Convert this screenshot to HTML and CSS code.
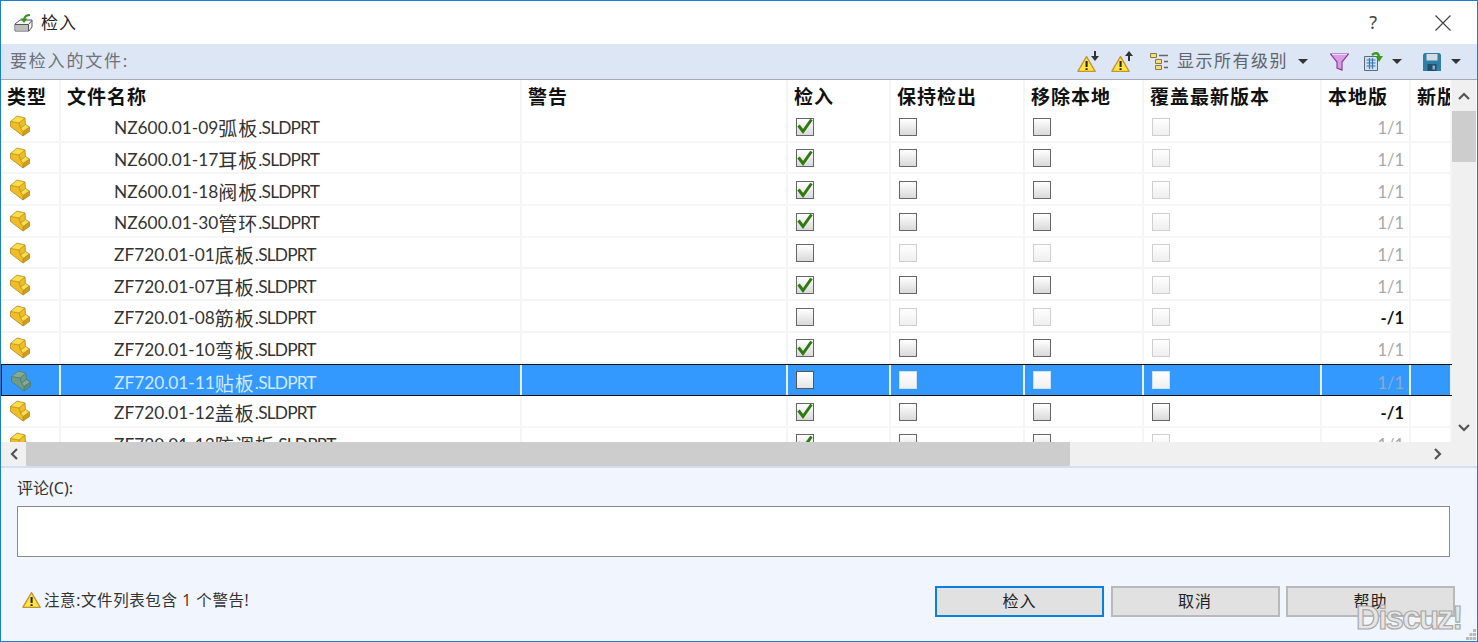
FILE: index.html
```html
<!DOCTYPE html>
<html lang="zh-CN">
<head>
<meta charset="utf-8">
<title>检入</title>
<link rel="stylesheet" href="styles.css">
</head>
<body>
<svg class="defs" width="0" height="0" aria-hidden="true">
  <symbol id="part" viewBox="0 0 20 22">
    <path class="p-side" d="M.5 6.500 9 8 10.500 13 13 16.500V21L.5 11.500Z"/>
    <path class="p-top" d="M.5 6.500 7 1 15 3 9 8Z"/>
    <path class="p-side" d="M9 8 15 3 15.500 9.500 10.500 13Z"/>
    <path class="p-top" d="M10.500 13 15.500 9.500 19.500 12 13 16.500Z"/>
    <path class="p-dark" d="M13 16.500 19.500 12V16.500L13 21Z"/>
    <path class="p-line" d="M.5 6.500 7 1 15 3 15.500 9.500 19.500 12V16.500L13 21 .5 11.500ZM.5 6.500 9 8 15 3M9 8 10.500 13 15.500 9.500M10.500 13 13 16.500 19.500 12M13 16.500V21"/>
  </symbol>
  <symbol id="tick" viewBox="0 0 18 18">
    <path d="M2.500 8.500 7 14.500 15.500 2.500" fill="none" stroke="#2e7a10" stroke-width="3"/>
  </symbol>
  <symbol id="warn" viewBox="0 0 22 20">
    <path d="M11 1.500 21 18.500H1Z" fill="#ffe83c" stroke="#c9913c" stroke-width="1.600" stroke-linejoin="round"/>
    <path d="M9.900 6.500h2.400v7H9.900ZM9.900 14.800h2.400v2.200H9.900Z" fill="#222"/>
  </symbol>
</svg>

<div class="window">
  <header class="titlebar">
    <svg class="title-icon" width="20" height="20" viewBox="0 0 20 20">
      <path d="M1 11 6 7H18V14L15 18H1Z" fill="#f4f4f4" stroke="#555"/>
      <path d="M1 11.500H14.500V18M14.500 11.500 18 7.500" fill="none" stroke="#555"/>
      <path d="M1.500 12H14V17.500H1.500Z" fill="#bdbdbd"/>
      <path d="M16 2C12 2 10.500 3.500 10 6.500" fill="none" stroke="#3d8f1e" stroke-width="2"/>
      <path d="M6.500 5.500H13.500L10 10Z" fill="#3d8f1e"/>
    </svg>
    <span class="title-text">检入</span>
    <span class="title-help">?</span>
    <svg class="title-close" width="16" height="16" viewBox="0 0 16 16">
      <path d="M.5.500 15.500 15.500M15.500.500 .5 15.500" stroke="#444" stroke-width="1.200"/>
    </svg>
  </header>

  <div class="toolbar">
    <span class="tb-label">要检入的文件:</span>
    <div class="tb-tools">
      <span class="tb-warn">
        <svg width="19" height="18" viewBox="0 0 22 20"><use href="#warn"/></svg>
        <svg class="tb-arrow" width="8" height="10" viewBox="0 0 8 10"><path d="M4 0V6" stroke="#333" stroke-width="2"/><path d="M0 5H8L4 10Z" fill="#333"/></svg>
      </span>
      <span class="tb-warn tb-warn2">
        <svg width="19" height="18" viewBox="0 0 22 20"><use href="#warn"/></svg>
        <svg class="tb-arrow" width="8" height="10" viewBox="0 0 8 10"><path d="M4 10V4" stroke="#333" stroke-width="2"/><path d="M0 5H8L4 0Z" fill="#333"/></svg>
      </span>
      <svg class="tb-levels" width="19" height="17" viewBox="0 0 19 17">
        <path d="M.5.500H6.500V4.500H.5ZM5.500 6.500H11.500V10.500H5.500ZM5.500 12.500H11.500V16.500H5.500Z" fill="#f8dc7c" stroke="#8a7a40"/>
        <path d="M9 2.500H18M14 8.500H18M14 14.500H18" stroke="#666" stroke-width="1.500"/>
      </svg>
      <span class="tb-levels-text">显示所有级别</span>
      <span class="caret caret-levels"></span>
      <svg class="tb-funnel" width="19" height="18" viewBox="0 0 19 18">
        <path d="M.5 1H18.500L12 9V17L7 15V9Z" fill="#d99ce6" stroke="#8a3fa0" stroke-width="1.200"/>
        <path d="M2 1.500H17" stroke="#f4dcf8" stroke-width="1"/>
      </svg>
      <svg class="tb-export" width="20" height="19" viewBox="0 0 20 19">
        <path d="M.5 4.500H13.500V18.500H.5Z" fill="#cfe0f0" stroke="#5a6a7a"/>
        <path d="M2.500 8H11.500M2.500 11H11.500M2.500 14H11.500M5.500 6V17M8.500 6V17" stroke="#3c78b8" stroke-width="1.200"/>
        <path d="M8 3C11 .5 14 .5 15 4" fill="none" stroke="#3d9a1e" stroke-width="2.400"/>
        <path d="M11.500 4H19L15 10Z" fill="#3d9a1e"/>
      </svg>
      <span class="caret caret-export"></span>
      <svg class="tb-save" width="18" height="18" viewBox="0 0 18 18">
        <path d="M0 1.500 1.500 0H16.500L18 1.500V18H0Z" fill="#2f7fa8"/>
        <path d="M3.500 1H14.500V7.500H3.500Z" fill="#d6dce2"/>
        <path d="M4.500 11H13.500V18H4.500Z" fill="#1f4f6a"/>
        <path d="M9.500 12.500H12V16.500H9.500Z" fill="#8fb0c4"/>
      </svg>
      <span class="caret caret-save"></span>
    </div>
  </div>

  <div class="listbox">
    <div class="table">
      <div class="row hdr">
        <div class="cell">类型</div><div class="cell">文件名称</div><div class="cell">警告</div><div class="cell">检入</div><div class="cell">保持检出</div><div class="cell">移除本地</div><div class="cell">覆盖最新版本</div><div class="cell">本地版</div><div class="cell">新版本</div>
      </div>

      <div class="row">
        <div class="cell"><svg class="part"><use href="#part"/></svg></div>
        <div class="cell name">NZ600.01-09<span class="cjk">弧板</span><span class="ext">.SLDPRT</span></div><div class="cell"></div>
        <div class="cell"><span class="cb on"><svg><use href="#tick"/></svg></span></div><div class="cell"><span class="cb"></span></div><div class="cell"><span class="cb"></span></div><div class="cell"><span class="cb off"></span></div>
        <div class="cell ver">1/1</div><div class="cell"></div>
      </div>
      <div class="row">
        <div class="cell"><svg class="part"><use href="#part"/></svg></div>
        <div class="cell name">NZ600.01-17<span class="cjk">耳板</span><span class="ext">.SLDPRT</span></div><div class="cell"></div>
        <div class="cell"><span class="cb on"><svg><use href="#tick"/></svg></span></div><div class="cell"><span class="cb"></span></div><div class="cell"><span class="cb"></span></div><div class="cell"><span class="cb off"></span></div>
        <div class="cell ver">1/1</div><div class="cell"></div>
      </div>
      <div class="row">
        <div class="cell"><svg class="part"><use href="#part"/></svg></div>
        <div class="cell name">NZ600.01-18<span class="cjk">阀板</span><span class="ext">.SLDPRT</span></div><div class="cell"></div>
        <div class="cell"><span class="cb on"><svg><use href="#tick"/></svg></span></div><div class="cell"><span class="cb"></span></div><div class="cell"><span class="cb"></span></div><div class="cell"><span class="cb off"></span></div>
        <div class="cell ver">1/1</div><div class="cell"></div>
      </div>
      <div class="row">
        <div class="cell"><svg class="part"><use href="#part"/></svg></div>
        <div class="cell name">NZ600.01-30<span class="cjk">管环</span><span class="ext">.SLDPRT</span></div><div class="cell"></div>
        <div class="cell"><span class="cb on"><svg><use href="#tick"/></svg></span></div><div class="cell"><span class="cb"></span></div><div class="cell"><span class="cb"></span></div><div class="cell"><span class="cb off"></span></div>
        <div class="cell ver">1/1</div><div class="cell"></div>
      </div>
      <div class="row">
        <div class="cell"><svg class="part"><use href="#part"/></svg></div>
        <div class="cell name">ZF720.01-01<span class="cjk">底板</span><span class="ext">.SLDPRT</span></div><div class="cell"></div>
        <div class="cell"><span class="cb"></span></div><div class="cell"><span class="cb off"></span></div><div class="cell"><span class="cb off"></span></div><div class="cell"><span class="cb off"></span></div>
        <div class="cell ver">1/1</div><div class="cell"></div>
      </div>
      <div class="row">
        <div class="cell"><svg class="part"><use href="#part"/></svg></div>
        <div class="cell name">ZF720.01-07<span class="cjk">耳板</span><span class="ext">.SLDPRT</span></div><div class="cell"></div>
        <div class="cell"><span class="cb on"><svg><use href="#tick"/></svg></span></div><div class="cell"><span class="cb"></span></div><div class="cell"><span class="cb"></span></div><div class="cell"><span class="cb off"></span></div>
        <div class="cell ver">1/1</div><div class="cell"></div>
      </div>
      <div class="row">
        <div class="cell"><svg class="part"><use href="#part"/></svg></div>
        <div class="cell name">ZF720.01-08<span class="cjk">筋板</span><span class="ext">.SLDPRT</span></div><div class="cell"></div>
        <div class="cell"><span class="cb"></span></div><div class="cell"><span class="cb off"></span></div><div class="cell"><span class="cb off"></span></div><div class="cell"><span class="cb off"></span></div>
        <div class="cell ver new">-/1</div><div class="cell"></div>
      </div>
      <div class="row">
        <div class="cell"><svg class="part"><use href="#part"/></svg></div>
        <div class="cell name">ZF720.01-10<span class="cjk">弯板</span><span class="ext">.SLDPRT</span></div><div class="cell"></div>
        <div class="cell"><span class="cb on"><svg><use href="#tick"/></svg></span></div><div class="cell"><span class="cb"></span></div><div class="cell"><span class="cb"></span></div><div class="cell"><span class="cb off"></span></div>
        <div class="cell ver">1/1</div><div class="cell"></div>
      </div>
      <div class="row selected">
        <div class="cell"><svg class="part"><use href="#part"/></svg></div>
        <div class="cell name">ZF720.01-11<span class="cjk">贴板</span><span class="ext">.SLDPRT</span></div><div class="cell"></div>
        <div class="cell"><span class="cb"></span></div><div class="cell"><span class="cb off"></span></div><div class="cell"><span class="cb off"></span></div><div class="cell"><span class="cb off"></span></div>
        <div class="cell ver">1/1</div><div class="cell"></div>
      </div>
      <div class="row">
        <div class="cell"><svg class="part"><use href="#part"/></svg></div>
        <div class="cell name">ZF720.01-12<span class="cjk">盖板</span><span class="ext">.SLDPRT</span></div><div class="cell"></div>
        <div class="cell"><span class="cb on"><svg><use href="#tick"/></svg></span></div><div class="cell"><span class="cb"></span></div><div class="cell"><span class="cb"></span></div><div class="cell"><span class="cb"></span></div>
        <div class="cell ver new">-/1</div><div class="cell"></div>
      </div>
      <div class="row">
        <div class="cell"><svg class="part"><use href="#part"/></svg></div>
        <div class="cell name">ZF720.01-13<span class="cjk">防调板</span><span class="ext">.SLDPRT</span></div><div class="cell"></div>
        <div class="cell"><span class="cb on"><svg><use href="#tick"/></svg></span></div><div class="cell"><span class="cb"></span></div><div class="cell"><span class="cb"></span></div><div class="cell"><span class="cb off"></span></div>
        <div class="cell ver">1/1</div><div class="cell"></div>
      </div>
    </div>

    <div class="vscroll">
      <span class="sb-btn sb-btn-v"><svg width="12" height="8" viewBox="0 0 12 8"><path d="M1 7 6 2 11 7" fill="none" stroke="#555" stroke-width="2.200"/></svg></span>
      <span class="v-thumb"></span>
      <span class="sb-space"></span>
      <span class="sb-btn sb-btn-v2"><svg width="12" height="8" viewBox="0 0 12 8"><path d="M1 1 6 6 11 1" fill="none" stroke="#555" stroke-width="2.200"/></svg></span>
    </div>
    <div class="hscroll">
      <span class="sb-btn sb-btn-h"><svg width="8" height="12" viewBox="0 0 8 12"><path d="M7 1 2 6 7 11" fill="none" stroke="#555" stroke-width="2.200"/></svg></span>
      <span class="h-thumb"></span>
      <span class="sb-space"></span>
      <span class="sb-btn sb-btn-h2"><svg width="8" height="12" viewBox="0 0 8 12"><path d="M1 1 6 6 1 11" fill="none" stroke="#555" stroke-width="2.200"/></svg></span>
    </div>
  </div>

  <div class="lower">
    <label class="comment-label">评论(C):</label>
    <div class="comment-box"></div>
    <div class="footer">
      <div class="notice">
        <svg width="19" height="18" viewBox="0 0 22 20"><use href="#warn"/></svg>
        <span>注意:文件列表包含 <b class="num">1</b> 个警告!</span>
      </div>
      <div class="buttons">
        <button class="btn primary">检入</button>
        <button class="btn">取消</button>
        <button class="btn">帮助</button>
      </div>
    </div>
  </div>

  <div class="watermark">Discuz!</div>
  <svg class="grip" width="10" height="11" viewBox="0 0 10 11">
    <path d="M7 0h3v3H7ZM3.500 4h3v3h-3ZM7 4h3v3H7ZM0 8h3v3H0ZM3.500 8h3v3h-3ZM7 8h3v3H7Z" fill="#b8b8b8"/>
  </svg>
</div>
</body>
</html>
```
FILE: styles.css
```css
* { box-sizing: border-box; }
html, body { margin: 0; padding: 0; }
body {
  width: 1478px;
  height: 642px;
  overflow: hidden;
  font-family: "Noto Sans", "Noto Sans CJK SC", sans-serif;
  color: #222;
  background: #fff;
}
.defs { position: absolute; }

.window {
  position: relative;
  width: 1478px;
  height: 642px;
  border: 1px solid #1b7fd1;
  display: flex;
  flex-direction: column;
  background: #f1f5fd;
}

/* title */
.titlebar {
  flex: 0 0 43px;
  display: flex;
  align-items: center;
  background: #fff;
  padding-left: 13px;
}
.title-icon { flex: none; }
.title-text { margin: 0 0 2px 7px; font-size: 17px; letter-spacing: 1px; color: #222; }
.title-help { margin: 0 0 2px auto; font-size: 18px; color: #444; }
.title-close { margin: 0 26px 0 58px; }

/* toolbar */
.toolbar {
  flex: 0 0 36px;
  display: flex;
  align-items: center;
  background: #dce6f4;
  border-bottom: 1px solid #a6a9ae;
  padding-left: 9px;
  color: #6c7178;
  font-size: 17px;
}
.tb-label { letter-spacing: 1.800px; color: #6e7176; padding-bottom: 4px; }
.tb-tools { margin-left: auto; display: flex; align-items: center; }
.tb-warn { position: relative; display: flex; width: 22px; height: 22px; align-items: flex-end; }
.tb-warn2 { margin-left: 12px; }
.tb-arrow { position: absolute; right: 0; top: 0; }
.tb-levels { margin-left: 17px; }
.tb-levels-text { margin-left: 8px; letter-spacing: 1.500px; color: #5f656d; padding-bottom: 4px; }
.caret {
  width: 0;
  height: 0;
  border-left: 5px solid transparent;
  border-right: 5px solid transparent;
  border-top: 5px solid #333;
}
.caret-levels { margin-left: 10px; }
.tb-funnel { margin-left: 22px; }
.tb-export { margin-left: 15px; }
.caret-export { margin-left: 8px; }
.tb-save { margin-left: 21px; }
.caret-save { margin: 0 16px 0 10px; }

/* list */
.listbox {
  flex: 0 0 386px;
  display: grid;
  grid-template-columns: 1451px 24px;
  grid-template-rows: 362px 24px;
  background: #fff;
}
.table { overflow: hidden; background: #fff; }
.row {
  display: grid;
  grid-template-columns: 60px 461px 266px 103px 134px 119px 178px 89px 41px;
  height: 31.670px;
  border-bottom: 2px solid #f5f5f5;
  font-family: "Lato", "Noto Sans CJK SC", sans-serif;
  font-size: 17.300px;
  color: #333;
}
.cell {
  display: flex;
  align-items: center;
  min-width: 0;
  overflow: hidden;
  white-space: nowrap;
  border-right: 2px solid #f5f5f5;
  padding-left: 8px;
}
.hdr {
  height: 31px;
  border-bottom: 0;
  font-size: 19px;
  font-weight: 700;
  letter-spacing: 1px;
  color: #111;
  font-family: "Noto Sans CJK SC", sans-serif;
}
.hdr .cell { padding: 0 0 0 6px; }
.name { padding-left: 53px; padding-top: 4px; }
.cjk { font-family: "Noto Sans CJK SC", sans-serif; font-size: 19px; letter-spacing: 1px; }
.ext { letter-spacing: -.8px; }
.ver {
  justify-content: flex-end;
  padding: 5px 5px 0 0;
  font-size: 16.500px;
  color: #a8a8a8;
}
.ver.new { font-weight: 700; color: #111; }
.part {
  width: 20px;
  height: 22px;
  margin: 1px 0 0 1px;
  --top: #ffdc44;
  --side: #f0bd22;
  --dark: #d39d10;
  --line: #a98a2a;
}
.p-side { fill: var(--side); }
.p-top { fill: var(--top); }
.p-dark { fill: var(--dark); }
.p-line { fill: none; stroke: var(--line); stroke-width: .8; stroke-linejoin: round; }

.cb {
  display: block;
  width: 18px;
  height: 18px;
  margin-top: 2px;
  border: 1.500px solid #666;
  background: linear-gradient(#fff, #d9d9d9);
}
.cb svg { display: block; width: 18px; height: 18px; margin: -1.500px; }
.cb.off { border-color: #cfcfcf; background: linear-gradient(#fff, #efefef); }

.selected {
  background: #3399ff;
  border-top: 1px solid #111;
  border-bottom: 1px solid #111;
  color: #d4e9ff;
}
.selected .cell { border-right-color: #e4f1ff; }
.selected .cell:first-child { border-left: 1px solid #111; }
.selected .cb { margin-top: 0; }
.selected .part { --top: #84aa92; --side: #6f9a84; --dark: #5f8c78; --line: #4f7a6c; }
.selected .ver { color: #8fa9c4; }
.selected .cb { border-color: #555; background: linear-gradient(#fff, #e4e4e4); }
.selected .cb.off { border-color: #cfe0f0; background: linear-gradient(#fff, #f0f0f0); }

.vscroll { display: flex; flex-direction: column; background: #f0f0f0; }
.hscroll { grid-column: 1 / 3; display: flex; background: #f0f0f0; }
.sb-btn { display: flex; align-items: center; justify-content: center; flex: none; }
.sb-btn-v { height: 31px; }
.sb-btn-v2 { height: 28px; }
.sb-btn-h { width: 25px; }
.sb-btn-h2 { width: 24px; margin-right: 26px; }
.v-thumb { flex: 0 0 51px; background: #cdcdcd; }
.h-thumb { flex: 0 0 1044px; background: #cdcdcd; }
.sb-space { flex: 1; }

/* lower */
.lower {
  flex: 1;
  display: flex;
  flex-direction: column;
  padding: 10px 27px 0 16px;
  border-top: 2px solid #d3e0f3;
}
.comment-label { font-size: 16px; color: #333; line-height: 20px; }
.comment-box {
  margin-top: 8px;
  height: 51px;
  background: #fff;
  border: 1px solid #8a8a8a;
}
.footer {
  margin-top: 29px;
  display: flex;
  align-items: center;
  justify-content: space-between;
  padding-left: 5px;
}
.notice { display: flex; align-items: center; gap: 3px; font-size: 15.500px; letter-spacing: .6px; color: #333; padding-bottom: 4px; }
.num { font-weight: 400; color: #7a2a1a; }
.buttons { display: flex; gap: 6.500px; margin-right: -5px; }
.btn {
  width: 169px;
  height: 31px;
  background: #e1e1e1;
  border: 2px solid #b9b9b9;
  font: inherit;
  font-size: 16px;
  letter-spacing: 1px;
  color: #222;
  padding: 0 0 4px;
}
.btn.primary { border-color: #0a7fdc; }

/* overlay */
.watermark {
  position: absolute;
  left: 1355px;
  top: 598px;
  font-family: "Liberation Sans", sans-serif;
  font-size: 33px;
  font-weight: 700;
  letter-spacing: -1.700px;
  line-height: 38px;
  color: #e6e6e6;
  -webkit-text-stroke: 1.200px #a9a9a9;
}
.grip { position: absolute; left: 1465px; top: 628px; }
```
